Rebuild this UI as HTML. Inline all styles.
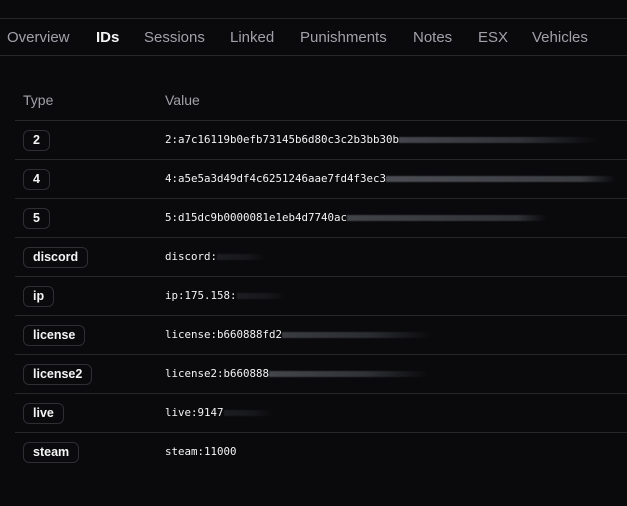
<!DOCTYPE html>
<html><head><meta charset="utf-8"><style>
body{margin:0;width:627px;height:506px;background:#0a0a0c;font-family:"Liberation Sans",sans-serif;overflow:hidden;position:relative}
.l{position:absolute;left:0;right:0;height:1px;background:#27272a}
.tab{position:absolute;top:29px;font-size:15px;color:#a1a1aa}
.th{position:absolute;top:92px;font-size:14px;color:#a1a1aa}
.row{position:absolute;left:15px;right:0;height:39px;border-top:1px solid #27272a}
.b{position:absolute;left:8px;top:9px;height:19px;line-height:19px;padding:0 9px;border:1px solid #2e2e33;border-radius:6px;font-size:12.5px;font-weight:bold;color:#f4f4f5}
.v{position:absolute;left:150px;top:12px;font-family:"DejaVu Sans Mono",monospace;font-size:10.8px;color:#f4f4f5;white-space:nowrap}
.blur{display:inline-block;height:6px;vertical-align:middle;background:linear-gradient(90deg,#6b6f78,#4a4d55 60%,transparent);opacity:.6;filter:blur(0.6px)}
</style></head><body>
<div class="l" style="top:18px"></div>
<div class="l" style="top:55px"></div>
<div class="tab" style="left:7px">Overview</div>
<div class="tab" style="left:96px;color:#f4f4f5;font-weight:bold">IDs</div>
<div class="tab" style="left:144px">Sessions</div>
<div class="tab" style="left:230px">Linked</div>
<div class="tab" style="left:300px">Punishments</div>
<div class="tab" style="left:413px">Notes</div>
<div class="tab" style="left:478px">ESX</div>
<div class="tab" style="left:532px">Vehicles</div>
<div class="th" style="left:23px">Type</div>
<div class="th" style="left:165px">Value</div>
<div class="row" style="top:120px"><div class="b">2</div><div class="v">2:a7c16119b0efb73145b6d80c3c2b3bb30b<span class="blur" style="width:200px"></span></div></div>
<div class="row" style="top:159px"><div class="b">4</div><div class="v">4:a5e5a3d49df4c6251246aae7fd4f3ec3<span class="blur" style="width:230px;background:linear-gradient(90deg,#777b84,#5a5e66 85%,transparent)"></span></div></div>
<div class="row" style="top:198px"><div class="b">5</div><div class="v">5:d15dc9b0000081e1eb4d7740ac<span class="blur" style="width:200px;background:linear-gradient(90deg,#666a72,#4a4d55 85%,transparent)"></span></div></div>
<div class="row" style="top:237px"><div class="b">discord</div><div class="v">discord:<span class="blur" style="width:50px;opacity:.2"></span></div></div>
<div class="row" style="top:276px"><div class="b">ip</div><div class="v">ip:175.158:<span class="blur" style="width:50px;opacity:.2"></span></div></div>
<div class="row" style="top:315px"><div class="b">license</div><div class="v">license:b660888fd2<span class="blur" style="width:150px;opacity:.5"></span></div></div>
<div class="row" style="top:354px"><div class="b">license2</div><div class="v">license2:b660888<span class="blur" style="width:160px;opacity:.6"></span></div></div>
<div class="row" style="top:393px"><div class="b">live</div><div class="v">live:9147<span class="blur" style="width:50px;opacity:.2"></span></div></div>
<div class="row" style="top:432px"><div class="b">steam</div><div class="v">steam:11000</div></div>
</body></html>
